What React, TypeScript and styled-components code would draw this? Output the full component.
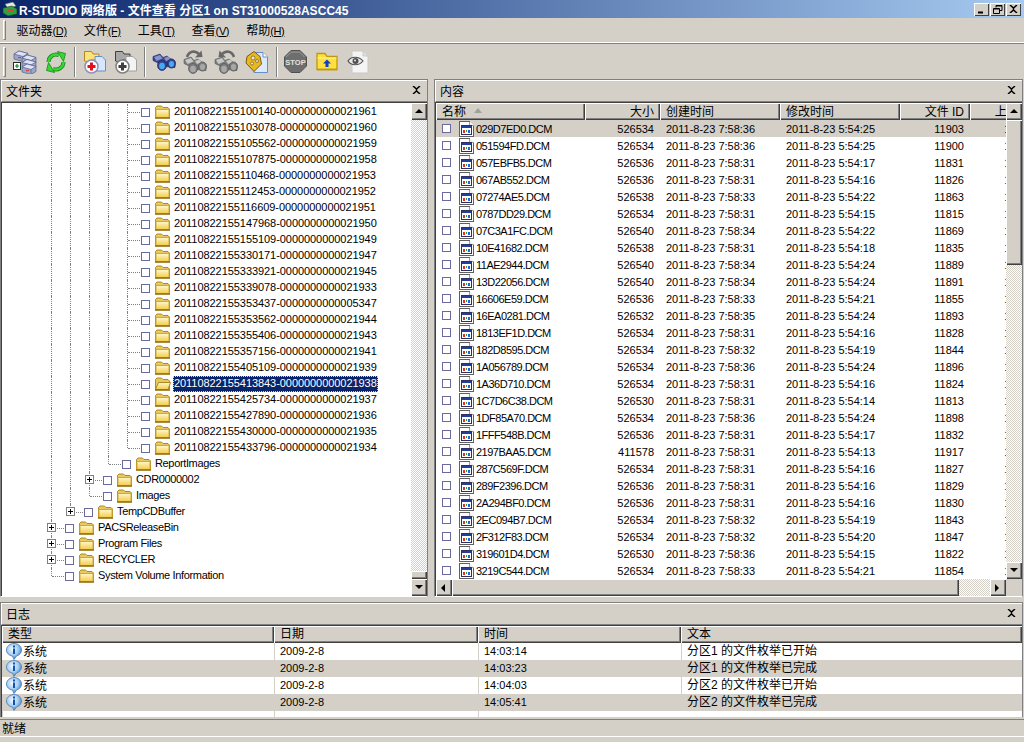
import styled, { createGlobalStyle } from 'styled-components';

const FACE = '#d4d0c8';
const SHADOW = '#808080';
const DARK = '#404040';
const CHECKER = `repeating-conic-gradient(${FACE} 0 25%, #fff 0 50%) 0 0 / 2px 2px`;

const GlobalStyle = createGlobalStyle`
  html, body {
    margin: 0;
    padding: 0;
    background: ${FACE};
  }
  * {
    box-sizing: border-box;
  }
`;

// ---- data

const treeLeaves = [
  '20110822155100140-0000000000021961',
  '20110822155103078-0000000000021960',
  '20110822155105562-0000000000021959',
  '20110822155107875-0000000000021958',
  '20110822155110468-0000000000021953',
  '20110822155112453-0000000000021952',
  '20110822155116609-0000000000021951',
  '20110822155147968-0000000000021950',
  '20110822155155109-0000000000021949',
  '20110822155330171-0000000000021947',
  '20110822155333921-0000000000021945',
  '20110822155339078-0000000000021933',
  '20110822155353437-0000000000005347',
  '20110822155353562-0000000000021944',
  '20110822155355406-0000000000021943',
  '20110822155357156-0000000000021941',
  '20110822155405109-0000000000021939',
  '20110822155413843-0000000000021938',
  '20110822155425734-0000000000021937',
  '20110822155427890-0000000000021936',
  '20110822155430000-0000000000021935',
  '20110822155433796-0000000000021934',
];

type TreeNode = { label: string; depth: number; guides: boolean[]; last?: boolean; plus?: boolean; selected?: boolean };

const treeRows: TreeNode[] = [
  ...treeLeaves.map((label, i) => ({
    label,
    depth: 5,
    guides: [true, true, true, true],
    last: i === treeLeaves.length - 1,
    selected: i === 17,
  })),
  { label: 'ReportImages', depth: 4, guides: [true, true, true], last: true },
  { label: 'CDR0000002', depth: 3, guides: [true, true], plus: true },
  { label: 'Images', depth: 3, guides: [true, true], last: true },
  { label: 'TempCDBuffer', depth: 2, guides: [true], plus: true, last: true },
  { label: 'PACSReleaseBin', depth: 1, guides: [], plus: true },
  { label: 'Program Files', depth: 1, guides: [], plus: true },
  { label: 'RECYCLER', depth: 1, guides: [], plus: true },
  { label: 'System Volume Information', depth: 1, guides: [], last: true },
];

const files = [
  ['029D7ED0.DCM', '526534', '7:58:36', '5:54:25', '11903'],
  ['051594FD.DCM', '526534', '7:58:36', '5:54:25', '11900'],
  ['057EBFB5.DCM', '526536', '7:58:31', '5:54:17', '11831'],
  ['067AB552.DCM', '526536', '7:58:31', '5:54:16', '11826'],
  ['07274AE5.DCM', '526538', '7:58:33', '5:54:22', '11863'],
  ['0787DD29.DCM', '526534', '7:58:31', '5:54:15', '11815'],
  ['07C3A1FC.DCM', '526540', '7:58:34', '5:54:22', '11869'],
  ['10E41682.DCM', '526538', '7:58:31', '5:54:18', '11835'],
  ['11AE2944.DCM', '526540', '7:58:34', '5:54:24', '11889'],
  ['13D22056.DCM', '526540', '7:58:34', '5:54:24', '11891'],
  ['16606E59.DCM', '526536', '7:58:33', '5:54:21', '11855'],
  ['16EA0281.DCM', '526532', '7:58:35', '5:54:24', '11893'],
  ['1813EF1D.DCM', '526534', '7:58:31', '5:54:16', '11828'],
  ['182D8595.DCM', '526534', '7:58:32', '5:54:19', '11844'],
  ['1A056789.DCM', '526534', '7:58:36', '5:54:24', '11896'],
  ['1A36D710.DCM', '526534', '7:58:31', '5:54:16', '11824'],
  ['1C7D6C38.DCM', '526530', '7:58:31', '5:54:14', '11813'],
  ['1DF85A70.DCM', '526534', '7:58:36', '5:54:24', '11898'],
  ['1FFF548B.DCM', '526536', '7:58:31', '5:54:17', '11832'],
  ['2197BAA5.DCM', '411578', '7:58:31', '5:54:13', '11917'],
  ['287C569F.DCM', '526534', '7:58:31', '5:54:16', '11827'],
  ['289F2396.DCM', '526536', '7:58:31', '5:54:16', '11829'],
  ['2A294BF0.DCM', '526536', '7:58:31', '5:54:16', '11830'],
  ['2EC094B7.DCM', '526534', '7:58:32', '5:54:19', '11843'],
  ['2F312F83.DCM', '526534', '7:58:32', '5:54:20', '11847'],
  ['319601D4.DCM', '526530', '7:58:36', '5:54:15', '11822'],
  ['3219C544.DCM', '526534', '7:58:33', '5:54:21', '11854'],
];

const logRows = [
  ['2009-2-8', '14:03:14', '分区1 的文件枚举已开始'],
  ['2009-2-8', '14:03:23', '分区1 的文件枚举已完成'],
  ['2009-2-8', '14:04:03', '分区2 的文件枚举已开始'],
  ['2009-2-8', '14:05:41', '分区2 的文件枚举已完成'],
];

const menus = [
  ['驱动器', '(D)'],
  ['文件', '(F)'],
  ['工具', '(T)'],
  ['查看', '(V)'],
  ['帮助', '(H)'],
];

// ---- small icons

function FolderIcon({ open }: { open?: boolean }) {
  return (
    <svg width="17" height="14" viewBox="0 0 17 14">
      <defs>
        <linearGradient id="folderFill" x1="0" y1="0" x2="0" y2="1">
          <stop offset="0" stopColor="#fff8cc" />
          <stop offset="1" stopColor="#f4cc4c" />
        </linearGradient>
      </defs>
      <path d="M1.5 12V2.500L3 1h4.500L9 2.500h5L15.500 4v8z" fill="#e8c860" stroke="#b08a20" />
      {open ? (
        <path d="M1.500 12.500L4.500 5.500h12L14 12.500z" fill="url(#folderFill)" stroke="#b08a20" />
      ) : (
        <rect x="2" y="4.500" width="13" height="8" fill="url(#folderFill)" stroke="#cfa93a" />
      )}
      <path d="M1 13h15" stroke="#94700f" strokeWidth="1.600" />
    </svg>
  );
}

function DocIcon() {
  return (
    <svg width="15" height="16" viewBox="0 0 15 16" shapeRendering="crispEdges">
      <path d="M.5.5h10l4 4v11H.5z" fill="#fff" stroke="#606060" />
      <path d="M10.500.5v4h4" fill="#f0f0f0" stroke="#a0a0a0" />
      <rect x="2.500" y="4.500" width="10" height="9" fill="#fff" stroke="#303060" />
      <rect x="3" y="5" width="9" height="2" fill="#2040a0" />
      <rect x="4" y="9" width="2" height="3" fill="#e03020" />
      <rect x="7" y="9" width="1" height="2" fill="#20a040" />
      <rect x="9" y="9" width="2" height="3" fill="#2060e0" />
    </svg>
  );
}

function InfoIcon() {
  return (
    <svg width="16" height="17" viewBox="0 0 16 17">
      <defs>
        <radialGradient id="infoFill" cx="0.4" cy="0.35" r="0.7">
          <stop offset="0" stopColor="#f4fbff" />
          <stop offset="0.55" stopColor="#a0ccf2" />
          <stop offset="1" stopColor="#3274c0" />
        </radialGradient>
      </defs>
      <path d="M8 .5c4 0 7.500 2.800 7.500 6.400 0 3-2.200 5.300-5 6.100L8 16.500 6.500 13C3 12.500.5 10 .5 6.900.5 3.300 4 .5 8 .5z" fill="url(#infoFill)" stroke="#5d88b8" />
      <rect x="7" y="2.500" width="2" height="2" fill="#1450b0" />
      <rect x="7" y="5.500" width="2" height="5.500" fill="#1450b0" />
    </svg>
  );
}

function CloseGlyph() {
  return (
    <svg width="9" height="8" viewBox="0 0 9 8">
      <path d="M1 0l3.500 3L8 0M1 8l3.500-3L8 8M4.500 3v2" stroke="#000" strokeWidth="1.500" fill="none" />
    </svg>
  );
}

function Arrow({ dir }: { dir: 'up' | 'down' | 'left' | 'right' }) {
  const d = { up: 'M0 5L4 1l4 4z', down: 'M0 1l4 4 4-4z', left: 'M5 0L1 4l4 4z', right: 'M1 0l4 4-4 4z' }[dir];
  return (
    <svg width="8" height="8" viewBox="0 0 8 8">
      <path d={d} fill="#000" />
    </svg>
  );
}

// ---- toolbar icons

function DriveBox({ x, y }: { x: number; y: number }) {
  return (
    <g transform={`translate(${x} ${y})`}>
      <path d="M0 3l5-3 9 2.500v5l-5 3-9-2.500z" fill="#9aa6cc" stroke="#565f8e" strokeWidth=".7" />
      <path d="M0 3l9 2.500 5-3-9-2.500z" fill="#dfe4f2" stroke="#565f8e" strokeWidth=".7" />
      <path d="M9 5.500v5" stroke="#565f8e" strokeWidth=".7" />
      <rect x="4" y="6" width="3" height="1.200" fill="#d04040" />
    </g>
  );
}

function DriveIcon() {
  return (
    <svg width="24" height="24" viewBox="0 0 24 24">
      <DriveBox x={1} y={1} />
      <DriveBox x={9} y={5} />
      <DriveBox x={9} y={9.500} />
      <DriveBox x={9} y={14} />
      <rect x=".5" y="12.500" width="7" height="7" fill="#fff" stroke="#203020" />
      <path d="M4 14v4M2 16h4" stroke="#108030" strokeWidth="1.200" />
    </svg>
  );
}

function RefreshArc() {
  return (
    <g>
      <path d="M3.500 12A7.500 7.500 0 0 1 14 5.200" fill="none" stroke="#108a18" strokeWidth="4" />
      <path d="M3.500 12A7.500 7.500 0 0 1 14 5.200" fill="none" stroke="#3cd434" strokeWidth="2.400" />
      <path d="M12.500 1.500l8 2-2 8z" fill="#3cd434" stroke="#108a18" strokeWidth=".8" />
    </g>
  );
}

function RefreshIcon() {
  return (
    <svg width="22" height="24" viewBox="0 0 22 24">
      <RefreshArc />
      <g transform="rotate(180 11 12)">
        <RefreshArc />
      </g>
    </svg>
  );
}

function PlusDoc({ gray }: { gray?: boolean }) {
  const folder = gray ? '#a8a8a8' : '#ffe27a';
  const edge = gray ? '#404040' : '#b08a20';
  const doc = gray ? '#f4f4f4' : '#d8e6fb';
  const docEdge = gray ? '#a0a0a0' : '#6a8cc8';
  const ring = gray ? '#808080' : '#8a94b8';
  const plus = gray ? '#404040' : '#e01020';
  return (
    <svg width="24" height="24" viewBox="0 0 24 24">
      <path d="M1.500 11V1.500h7L10 4h6v6H8v3z" fill={folder} stroke={edge} />
      <path d="M12 6.500h7l3.500 3.500v11H12z" fill={doc} stroke={docEdge} />
      <circle cx="8.500" cy="16.500" r="6.500" fill="#fff" stroke={ring} strokeWidth="1.500" />
      <path d="M8.500 12.500v8M4.500 16.500h8" stroke={plus} strokeWidth="3" />
    </svg>
  );
}

function Binoculars({ blue }: { blue?: boolean }) {
  const body = blue ? '#36468e' : '#7c7c7c';
  const top = blue ? '#8a94cc' : '#c8c8c8';
  const lens = blue ? '#48aaf4' : '#a8a8a8';
  const edge = blue ? '#1c2868' : '#585858';
  return (
    <g>
      <path d="M1 5.500L8 3l3 3.500 4-1.500 3 2.500 5 3v6l-10-1-6-3-6-3z" fill={body} stroke={edge} strokeWidth=".6" />
      <path d="M2 6l6-2 2.500 3.500-6 2.500z" fill={top} />
      <path d="M12 7l4-1.500 3 3-5 1.500z" fill={top} />
      <ellipse cx="10" cy="14.500" rx="4.500" ry="5" fill={body} stroke={edge} strokeWidth=".7" />
      <ellipse cx="10" cy="15" rx="2.800" ry="3.300" fill={lens} />
      <ellipse cx="19.500" cy="12.500" rx="4" ry="4.600" fill={body} stroke={edge} strokeWidth=".7" />
      <ellipse cx="19.500" cy="13" rx="2.500" ry="3" fill={lens} />
    </g>
  );
}

function FindIcon() {
  return (
    <svg width="24" height="22" viewBox="0 0 24 22">
      <Binoculars blue />
    </svg>
  );
}

function FindNavIcon({ back }: { back?: boolean }) {
  return (
    <svg width="24" height="26" viewBox="0 0 24 26">
      <g transform="translate(0 5)">
        <Binoculars />
      </g>
      <g transform={back ? 'translate(24 0) scale(-1 1)' : undefined}>
        <path d="M4 8C6 2 12 1 16 5" fill="none" stroke="#686868" strokeWidth="2.600" />
        <path d="M12 8.500l7.500-.5-1-6.500z" fill="#686868" />
      </g>
    </svg>
  );
}

function TagDocIcon() {
  return (
    <svg width="24" height="24" viewBox="0 0 24 24">
      <path d="M9 2.500h9l4.500 4.500v15.500H9z" fill="#dce8fb" stroke="#6a8cc8" />
      <path d="M18 2.500V7h4.500" fill="#fff" stroke="#6a8cc8" />
      <path d="M9 1.500l6 5 1.500 7.500-7.500 7.500L1 13l1-6.500z" fill="#e8b820" stroke="#7a5a08" />
      <circle cx="8" cy="8" r="2" fill="#e8e8e8" stroke="#7a5a08" strokeWidth=".7" />
      <circle cx="12" cy="11" r="1.500" fill="#e8e8e8" stroke="#7a5a08" strokeWidth=".7" />
      <circle cx="7" cy="13.500" r="1.500" fill="#e8e8e8" stroke="#7a5a08" strokeWidth=".7" />
    </svg>
  );
}

function StopIcon() {
  return (
    <svg width="23" height="23" viewBox="0 0 23 23">
      <path d="M7 .5h9L22.500 7v9L16 22.500H7L.5 16V7z" fill="#6e6e6e" stroke="#505050" />
      <path d="M2 7l5.500-5h8l5 5" fill="none" stroke="#9a9a9a" />
      <text x="11.500" y="14.500" textAnchor="middle" fontFamily="Liberation Sans" fontWeight="700" fontSize="7.500" fill="#e4e4e4">
        STOP
      </text>
    </svg>
  );
}

function FolderUpIcon() {
  return (
    <svg width="22" height="19" viewBox="0 0 22 19">
      <path d="M1 17.500V1.500h8l2 3h10v13z" fill="#ffe040" stroke="#c09808" strokeWidth="1.300" />
      <path d="M1.500 6h19" stroke="#fff4a8" />
      <path d="M1 17.500h20" stroke="#c09808" strokeWidth="1.500" />
      <path d="M11 7.500l4 4h-2.500v3.500h-3v-3.500H7z" fill="#1040c8" />
    </svg>
  );
}

function EyeDocIcon() {
  return (
    <svg width="22" height="24" viewBox="0 0 22 24">
      <path d="M5 1h11l5 5v17H5z" fill="#f4f4f4" stroke="#c8c8c8" />
      <path d="M16 1v5h5" fill="#e0e0e0" stroke="#c8c8c8" />
      <path d="M1 11c3-5 11-5 15 0-4 5-12 5-15 0z" fill="#e8e8e8" stroke="#505050" strokeWidth="1.200" />
      <circle cx="8.500" cy="11" r="3" fill="#505050" />
      <circle cx="8" cy="10.500" r="1" fill="#e8e8e8" />
    </svg>
  );
}

// ---- window chrome

const Window = styled.div`
  width: 1024px;
  height: 742px;
  overflow: hidden;
  display: flex;
  flex-direction: column;
  background: ${FACE};
  color: #000;
  font-family: 'Liberation Sans', 'Noto Sans CJK SC', sans-serif;
  font-size: 11px;
`;

const TitleBar = styled.div`
  height: 18px;
  flex: none;
  display: flex;
  align-items: center;
  padding: 0 2px 0 2px;
  background: linear-gradient(90deg, #0a246a, #a6caf0);
`;

const TitleText = styled.div`
  flex: 1;
  margin-left: 1px;
  color: #fff;
  font-weight: 700;
  font-size: 12px;
  letter-spacing: 0.05px;
  white-space: nowrap;
`;

const CaptionButtons = styled.div`
  display: flex;
  gap: 1px;
  margin-right: 1px;
`;

const CaptionButton = styled.div`
  width: 15px;
  height: 13px;
  display: flex;
  align-items: center;
  justify-content: center;
  background: ${FACE};
  box-shadow: inset 1px 1px 0 #fff, inset -1px -1px 0 ${DARK};
`;

const MenuBar = styled.div`
  height: 25px;
  flex: none;
  display: flex;
  align-items: center;
  padding-left: 3px;
  border-bottom: 1px solid #fff;
`;

const Grip = styled.div<{ $h: number }>`
  width: 3px;
  height: ${(p) => p.$h}px;
  flex: none;
  border: 1px solid;
  border-color: #fff ${SHADOW} ${SHADOW} #fff;
`;

const MenuItems = styled.div`
  display: flex;
  margin-left: 2px;
  padding-bottom: 2px;
`;

const MenuItem = styled.div`
  padding: 0 8.5px;
  font-size: 12px;
  white-space: nowrap;
`;

const MenuKey = styled.span`
  font-size: 11px;
  letter-spacing: -0.37px;
  text-decoration: underline;
`;

const ToolBar = styled.div`
  height: 36px;
  flex: none;
  display: flex;
  align-items: center;
  padding-left: 3px;
  border-top: 1px solid ${SHADOW};
`;

const ToolGroup = styled.div`
  display: flex;
  margin-left: 3px;
`;

const ToolButton = styled.div`
  width: 31px;
  height: 30px;
  display: flex;
  align-items: center;
  justify-content: center;
`;

const ToolSep = styled.div<{ $left: number; $right: number }>`
  width: 2px;
  height: 30px;
  margin: 0 ${(p) => p.$right}px 0 ${(p) => p.$left}px;
  border-left: 1px solid ${SHADOW};
  border-right: 1px solid #fff;
`;

// ---- panes

const Panes = styled.div`
  height: 522px;
  flex: none;
  display: flex;
  gap: 6px;
  padding-bottom: 4px;
`;

const Pane = styled.section<{ $w: number }>`
  width: ${(p) => p.$w}px;
  flex: none;
  display: flex;
  flex-direction: column;
  border: 1px solid ${SHADOW};
  border-bottom-color: #fff;
`;

const PaneHeader = styled.header`
  height: 22px;
  flex: none;
  display: flex;
  align-items: center;
  justify-content: space-between;
  padding: 0 6px 2px 4px;
  font-size: 12px;
  border-top: 1px solid #fff;
  border-left: 1px solid #fff;
  border-bottom: 1px solid ${SHADOW};
`;

const Sunken = styled.div`
  flex: 1;
  min-height: 0;
  display: flex;
  background: #fff;
  border-top: 1px solid ${DARK};
  border-left: 1px solid ${DARK};
`;

const TreeBody = styled.div`
  flex: 1;
  min-width: 0;
  padding: 1px 0 0 49px;
  overflow: hidden;
  font-size: 11px;
`;

const TreeRow = styled.div`
  height: 16px;
  display: flex;
  align-items: center;
`;

const Guide = styled.div<{ $on: boolean }>`
  width: 19px;
  height: 16px;
  flex: none;
  border-left: 1px dotted ${(p) => (p.$on ? SHADOW : 'transparent')};
`;

const Connector = styled.div<{ $last?: boolean }>`
  position: relative;
  width: 14px;
  height: ${(p) => (p.$last ? '8px' : '16px')};
  flex: none;
  align-self: flex-start;
  border-left: 1px dotted ${SHADOW};

  &::after {
    content: '';
    position: absolute;
    left: 0;
    top: 8px;
    width: 12px;
    border-top: 1px dotted ${SHADOW};
  }
`;

const Expander = styled.div`
  position: absolute;
  left: -5px;
  top: 3px;
  width: 9px;
  height: 9px;
  background: #fff;
  border: 1px solid ${SHADOW};
  z-index: 1;

  &::before {
    content: '';
    position: absolute;
    left: 1px;
    top: 3px;
    width: 5px;
    height: 1px;
    background: #000;
  }

  &::after {
    content: '';
    position: absolute;
    left: 3px;
    top: 1px;
    width: 1px;
    height: 5px;
    background: #000;
  }
`;

const Check = styled.div`
  width: 9px;
  height: 9px;
  flex: none;
  background: #fff;
  border: 1px solid #6a6a9c;
`;

const TreeFolder = styled.div`
  display: flex;
  flex: none;
  margin: 0 2px 0 4px;
`;

const TreeLabel = styled.div<{ $selected?: boolean; $tight?: boolean }>`
  height: 16px;
  line-height: 15px;
  padding: 0 1px 0 1px;
  white-space: nowrap;
  letter-spacing: ${(p) => (p.$tight ? '-0.35px' : '-0.06px')};
  color: ${(p) => (p.$selected ? '#fff' : '#000')};
  background: ${(p) => (p.$selected ? '#0a246a' : 'transparent')};
  outline: ${(p) => (p.$selected ? '1px dotted #d4d0c8' : 'none')};
  outline-offset: -1px;
`;

// ---- scrollbars

const VScroll = styled.div`
  width: 16px;
  flex: none;
  display: flex;
  flex-direction: column;
  background: ${CHECKER};
`;

const ScrollButton = styled.div`
  width: 16px;
  height: 17px;
  flex: none;
  display: flex;
  align-items: center;
  justify-content: center;
  background: ${FACE};
  box-shadow: inset 1px 1px 0 #fff, inset -1px -1px 0 ${DARK}, inset -2px -2px 0 ${SHADOW};
`;

const VTrack = styled.div<{ $end?: boolean }>`
  flex: 1;
  display: flex;
  flex-direction: column;
  justify-content: ${(p) => (p.$end ? 'flex-end' : 'flex-start')};
`;

const VThumb = styled.div<{ $h: number }>`
  height: ${(p) => p.$h}px;
  flex: none;
  background: ${FACE};
  box-shadow: inset 1px 1px 0 #fff, inset -1px -1px 0 ${DARK}, inset -2px -2px 0 ${SHADOW};
`;

const HScrollRow = styled.div`
  height: 17px;
  flex: none;
  display: flex;
  background: ${FACE};
`;

const HTrack = styled.div`
  flex: 1;
  display: flex;
  background: ${CHECKER};
`;

const HThumb = styled.div`
  width: 507px;
  flex: none;
  background: ${FACE};
  box-shadow: inset 1px 1px 0 #fff, inset -1px -1px 0 ${DARK}, inset -2px -2px 0 ${SHADOW};
`;

const ScrollCorner = styled.div`
  width: 16px;
  flex: none;
`;

// ---- lists

const ListColumn = styled.div`
  flex: 1;
  min-width: 0;
  display: flex;
  flex-direction: column;
  overflow: hidden;
`;

const FileArea = styled.div`
  flex: 1;
  min-height: 0;
  display: flex;
`;

const HeaderRow = styled.div`
  height: 17px;
  flex: none;
  display: flex;
  background: ${FACE};
`;

const HeaderCell = styled.div<{ $w: number; $right?: boolean }>`
  width: ${(p) => p.$w}px;
  flex: none;
  display: flex;
  align-items: center;
  justify-content: ${(p) => (p.$right ? 'flex-end' : 'flex-start')};
  padding: 0 6px 2px;
  font-size: 12px;
  white-space: nowrap;
  box-shadow: inset 1px 1px 0 #fff, inset -1px -1px 0 ${DARK}, inset -2px -2px 0 ${SHADOW};
`;

const SortMark = styled.div`
  margin-left: 8px;
  width: 0;
  height: 0;
  border-left: 4px solid transparent;
  border-right: 4px solid transparent;
  border-bottom: 5px solid #a0a0a0;
`;

const FileRow = styled.div<{ $active?: boolean }>`
  height: 17px;
  flex: none;
  display: flex;
  align-items: center;
  background: ${(p) => (p.$active ? FACE : '#fff')};
`;

const Cell = styled.div<{ $w: number; $right?: boolean }>`
  width: ${(p) => p.$w}px;
  flex: none;
  padding: 0 6px;
  white-space: nowrap;
  text-align: ${(p) => (p.$right ? 'right' : 'left')};
`;

const NameCell = styled.div`
  width: 149px;
  flex: none;
  display: flex;
  align-items: center;
  padding-left: 6px;
  letter-spacing: -0.5px;
`;

const FileIcon = styled.div`
  display: flex;
  margin: 0 2px 0 8px;
`;

// ---- log

const LogPane = styled.section`
  height: 115px;
  flex: none;
  margin: 1px 1px 0 0;
  display: flex;
  flex-direction: column;
  border: 1px solid ${SHADOW};
  border-bottom: none;
`;

const LogBody = styled.div`
  flex: 1;
  min-height: 0;
  display: flex;
  flex-direction: column;
  background: #fff;
  border-top: 1px solid ${DARK};
  border-left: 1px solid ${DARK};
`;

const LogHeaderCell = styled.div<{ $w: number; $grow?: boolean }>`
  width: ${(p) => p.$w}px;
  flex: ${(p) => (p.$grow ? '1' : 'none')};
  padding: 0 6px;
  font-size: 12px;
  line-height: 16px;
  box-shadow: inset 1px 1px 0 #fff, inset -1px -1px 0 ${DARK}, inset -2px -2px 0 ${SHADOW};
`;

const LogRow = styled.div<{ $shaded: boolean }>`
  height: 17px;
  flex: none;
  display: flex;
  align-items: center;
  background: ${(p) => (p.$shaded ? FACE : '#fff')};
`;

const LogCell = styled.div<{ $w: number; $cjk?: boolean }>`
  width: ${(p) => p.$w}px;
  flex: none;
  height: 17px;
  line-height: ${(p) => (p.$cjk ? '17px' : '16px')};
  padding-left: 5px;
  font-size: ${(p) => (p.$cjk ? '12px' : '11px')};
  white-space: nowrap;
  border-left: 1px solid ${FACE};
`;

const LogTypeCell = styled.div`
  width: 272px;
  height: 17px;
  line-height: 18px;
  flex: none;
  display: flex;
  align-items: flex-start;
  gap: 1px;
  padding-left: 4px;
  font-size: 12px;
`;

const LogFiller = styled.div`
  flex: 1;
  display: flex;
`;

const LogFillerCell = styled.div<{ $w: number }>`
  width: ${(p) => p.$w}px;
  flex: none;
  border-left: 1px solid ${FACE};
`;

const StatusBar = styled.footer`
  height: 18px;
  flex: none;
  margin-top: 2px;
  padding: 0 0 2px 2px;
  display: flex;
  align-items: center;
  font-size: 12px;
  border-top: 1px solid ${SHADOW};
  border-bottom: 1px solid #fff;
`;

function TreeItem({ node }: { node: TreeNode }) {
  return (
    <TreeRow>
      {node.guides.map((on, i) => (
        <Guide key={i} $on={on} />
      ))}
      <Connector $last={node.last}>
        {node.plus && <Expander />}
      </Connector>
      <Check />
      <TreeFolder>
        <FolderIcon open={node.selected} />
      </TreeFolder>
      <TreeLabel $selected={node.selected} $tight={node.depth < 5}>
        {node.label}
      </TreeLabel>
    </TreeRow>
  );
}

function ListArea() {
  return (
    <FileArea>
      <ListColumn>
        <HeaderRow>
          <HeaderCell $w={149}>
            名称
            <SortMark />
          </HeaderCell>
          <HeaderCell $w={75} $right>大小</HeaderCell>
          <HeaderCell $w={120}>创建时间</HeaderCell>
          <HeaderCell $w={120}>修改时间</HeaderCell>
          <HeaderCell $w={70} $right>文件 ID</HeaderCell>
          <HeaderCell $w={70} $right>上级 ID</HeaderCell>
        </HeaderRow>
        {files.map(([name, size, created, modified, id], i) => (
          <FileRow key={name} $active={i === 0}>
            <NameCell>
              <Check />
              <FileIcon>
                <DocIcon />
              </FileIcon>
              {name}
            </NameCell>
            <Cell $w={75} $right>{size}</Cell>
            <Cell $w={120}>2011-8-23 {created}</Cell>
            <Cell $w={120}>2011-8-23 {modified}</Cell>
            <Cell $w={70} $right>{id}</Cell>
            <Cell $w={70} $right>11790</Cell>
          </FileRow>
        ))}
      </ListColumn>
      <VScroll>
        <ScrollButton><Arrow dir="up" /></ScrollButton>
        <VTrack>
          <VThumb $h={145} />
        </VTrack>
        <ScrollButton><Arrow dir="down" /></ScrollButton>
      </VScroll>
    </FileArea>
  );
}

export default function App() {
  return (
    <>
      <GlobalStyle />
      <Window>
        <TitleBar>
          <svg width="16" height="16" viewBox="0 0 16 16">
            <path d="M3 3l8-2 3 4-8 3z" fill="#e8e8f0" stroke="#406040" strokeWidth=".6" />
            <path d="M1 7l9-2 5 3v5l-9 2-5-3z" fill="#30a040" stroke="#104020" strokeWidth=".6" />
            <rect x="6" y="8" width="6" height="3" fill="#e04040" />
          </svg>
          <TitleText>R-STUDIO 网络版 - 文件查看 分区1 on ST31000528ASCC45</TitleText>
          <CaptionButtons>
            <CaptionButton>
              <svg width="9" height="9" viewBox="0 0 9 9">
                <path d="M1 7.500h5" stroke="#000" strokeWidth="2" />
              </svg>
            </CaptionButton>
            <CaptionButton>
              <svg width="10" height="9" viewBox="0 0 10 9">
                <path d="M3 2.500V.5h6v5H7M.5 3.500h6v5h-6z" fill="none" stroke="#000" />
                <path d="M3 1h6M1 4h5" stroke="#000" />
              </svg>
            </CaptionButton>
            <CaptionButton>
              <CloseGlyph />
            </CaptionButton>
          </CaptionButtons>
        </TitleBar>

        <MenuBar>
          <Grip $h={20} />
          <MenuItems>
            {menus.map(([label, key]) => (
              <MenuItem key={key}>
                {label}
                <MenuKey>{key}</MenuKey>
              </MenuItem>
            ))}
          </MenuItems>
        </MenuBar>

        <ToolBar>
          <Grip $h={30} />
          <ToolGroup>
            <ToolButton><DriveIcon /></ToolButton>
            <ToolButton><RefreshIcon /></ToolButton>
            <ToolSep $left={3} $right={3} />
            <ToolButton><PlusDoc /></ToolButton>
            <ToolButton><PlusDoc gray /></ToolButton>
            <ToolSep $left={3} $right={2} />
            <ToolButton><FindIcon /></ToolButton>
            <ToolButton><FindNavIcon /></ToolButton>
            <ToolButton><FindNavIcon back /></ToolButton>
            <ToolButton><TagDocIcon /></ToolButton>
            <ToolSep $left={4} $right={2} />
            <ToolButton><StopIcon /></ToolButton>
            <ToolButton><FolderUpIcon /></ToolButton>
            <ToolButton><EyeDocIcon /></ToolButton>
          </ToolGroup>
        </ToolBar>

        <Panes>
          <Pane $w={428}>
            <PaneHeader>
              文件夹
              <CloseGlyph />
            </PaneHeader>
            <Sunken>
              <TreeBody>
                {treeRows.map((node) => (
                  <TreeItem key={node.label} node={node} />
                ))}
              </TreeBody>
              <VScroll>
                <ScrollButton><Arrow dir="up" /></ScrollButton>
                <VTrack $end>
                  <VThumb $h={8} />
                </VTrack>
                <ScrollButton><Arrow dir="down" /></ScrollButton>
              </VScroll>
            </Sunken>
          </Pane>

          <Pane $w={589}>
            <PaneHeader>
              内容
              <CloseGlyph />
            </PaneHeader>
            <Sunken>
              <ListColumn>
                <ListArea />
                <HScrollRow>
                  <ScrollButton><Arrow dir="left" /></ScrollButton>
                  <HTrack>
                    <HThumb />
                  </HTrack>
                  <ScrollButton><Arrow dir="right" /></ScrollButton>
                  <ScrollCorner />
                </HScrollRow>
              </ListColumn>
            </Sunken>
          </Pane>
        </Panes>

        <LogPane>
          <PaneHeader>
            日志
            <CloseGlyph />
          </PaneHeader>
          <LogBody>
            <HeaderRow>
              <LogHeaderCell $w={272}>类型</LogHeaderCell>
              <LogHeaderCell $w={204}>日期</LogHeaderCell>
              <LogHeaderCell $w={203}>时间</LogHeaderCell>
              <LogHeaderCell $w={340} $grow>文本</LogHeaderCell>
            </HeaderRow>
            {logRows.map(([date, time, text], i) => (
              <LogRow key={time} $shaded={i % 2 === 1}>
                <LogTypeCell>
                  <InfoIcon />
                  系统
                </LogTypeCell>
                <LogCell $w={204}>{date}</LogCell>
                <LogCell $w={203}>{time}</LogCell>
                <LogCell $w={340} $cjk>{text}</LogCell>
              </LogRow>
            ))}
            <LogFiller>
              <LogFillerCell $w={272} />
              <LogFillerCell $w={204} />
              <LogFillerCell $w={203} />
            </LogFiller>
          </LogBody>
        </LogPane>

        <StatusBar>就绪</StatusBar>
      </Window>
    </>
  );
}
